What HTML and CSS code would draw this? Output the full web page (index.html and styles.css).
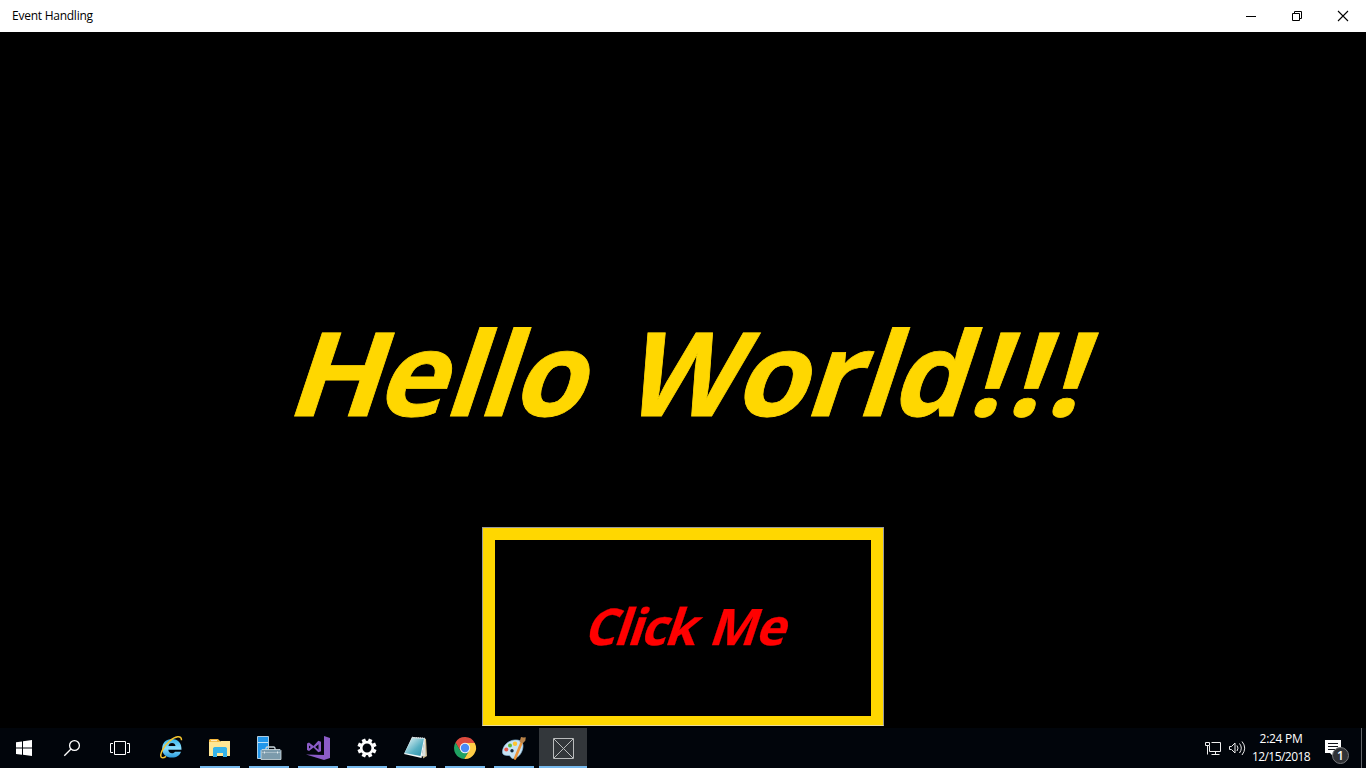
FILE: index.html
```html
<!DOCTYPE html>
<html lang="en">
<head>
<meta charset="utf-8">
<title>Event Handling</title>
<link rel="stylesheet" href="styles.css">
</head>
<body>
<div class="screen">
  <header class="titlebar">
    <span class="title">Event Handling</span>
    <div class="controls">
      <svg width="46" height="32" viewBox="0 0 46 32"><path d="M18 16.500h10" stroke="#000"/></svg>
      <svg width="46" height="32" viewBox="0 0 46 32" fill="none" stroke="#000"><path d="M18.500 13.500h7v7h-7zM20.500 13.500v-2h7v7h-2"/></svg>
      <svg width="46" height="32" viewBox="0 0 46 32"><path d="M18 11l10 10M28 11l-10 10" stroke="#000" stroke-width="1.100"/></svg>
    </div>
  </header>
  <main class="content">
    <h1 class="greeting"><span class="hello"><span class="cap">H</span>ello</span><span class="world">World</span><span class="bangs">!!!</span></h1>
    <button class="click"><span class="face"><span class="click-word">Click</span><span class="me-word">Me</span></span></button>
  </main>
  <footer class="taskbar">
    <div class="slot"><svg width="48" height="40" viewBox="0 0 48 40"><path fill="#fff" d="M16 14.200l6-.8v6.100h-6zM23 13.200l9-1.200v7.500h-9zM16 20.500h6v6.300l-6-.8zM23 20.500h9V28l-9-1.200z"/></svg></div>
    <div class="slot"><svg width="48" height="40" viewBox="0 0 48 40" fill="none" stroke="#fff" stroke-width="1.300"><circle cx="26.500" cy="17.500" r="4.900"/><path d="M23 21l-6.700 6.700"/></svg></div>
    <div class="slot"><svg width="48" height="40" viewBox="0 0 48 40" fill="none" stroke="#fff"><path d="M18.500 13.500h11v13h-11zM17 15.500h-2.500v9H17M31 15.500h2.500v9H31"/></svg></div>
    <nav class="apps">
      <div class="app"><svg width="40" height="40" viewBox="1 0 40 40"><defs><linearGradient id="ie" x2="0" y2="1"><stop stop-color="#35b4e9"/><stop offset=".5" stop-color="#8be0ff"/><stop offset="1" stop-color="#2a9cdd"/></linearGradient></defs><path fill="url(#ie)" fill-rule="evenodd" d="M31.500 21.800H18.300c.2 2.300 1.600 3.500 3.700 3.500 1.500 0 2.500-.6 3-1.500h6c-1.200 3.600-4.300 5.800-9 5.800-6 0-9.800-3.400-9.800-9.200 0-5.700 4-9.500 9.700-9.500 6.300 0 9.900 4.200 9.600 10.900zM18.500 18h7c-.2-2-1.500-3.100-3.500-3.100-1.900 0-3.200 1.100-3.500 3.100z"/><path d="M31.500 12.200c.3-5.500-6.500-4.200-12 1-6.500 5.500-10 13.500-8.200 16 1 1 2.900.5 4.700-.8" fill="none" stroke="#f5c52f" stroke-width="1.500"/></svg></div>
      <div class="app open"><svg width="40" height="40" viewBox="0 0 40 40"><path fill="#f5b83d" d="M9 12l1-1h8l2 2v4H9z"/><path fill="#fff" d="M11 12.300h6v.8h-6z"/><path fill="#ffe694" d="M9 14h10l2-1h9v15H9z"/><path fill="#35b3e9" d="M13 20l1.500-1h11l1.500 1v9h-4v-4h-6v4h-4z"/></svg></div>
      <div class="app open"><svg width="40" height="40" viewBox="0 0 40 40"><path fill="#2196ea" stroke="#d7edfa" stroke-width=".8" d="M8.500 8.500h11v22h-11z"/><path stroke="#bce3fb" d="M9 14.500h10"/><path d="M17 22v-2l1-1h7l1 1v2" fill="none" stroke="#c7d5dc" stroke-width="1.300"/><path fill="#7c9bac" stroke="#d6e1e5" stroke-width=".8" d="M13 21.500h18l1 1v9H12v-9z"/><path d="M12.500 24.500h19" stroke="#b7c9d2" stroke-width=".7"/><path d="M15.500 23.500v2M28.500 23.500v2" stroke="#dfe8ec"/></svg></div>
      <div class="app open"><svg width="40" height="40" viewBox="0 0 40 40" fill="#8b5cc7"><path d="M26 8l6 2v20l-6 2-18-5.600 18 .500z"/><path fill-rule="evenodd" d="M9 15.500l2-1 4.500 3.500 4.800-5.200 2.700 1v9.500l-2.700 1-4.800-4.800-4.500 3.500-2-1zm2 2v3l1.800-1.500zm9.500-1.300l-3.300 2.800 3.300 2.700z"/></svg></div>
      <div class="app open"><svg width="40" height="40" viewBox="0 0 40 40" fill="none" stroke="#fff"><circle cx="20" cy="20" r="5.800" stroke-width="2.700"/><path stroke-width="3.800" d="M17.500 14l-1.200-2.800M22.500 14l1.200-2.800M26 17.500l2.800-1.200M26 22.500l2.800 1.200M22.500 26l1.200 2.800M17.500 26l-1.200 2.800M14 22.500l-2.800 1.200M14 17.500l-2.800-1.200"/></svg></div>
      <div class="app open"><svg width="40" height="40" viewBox="0 0 40 40"><defs><linearGradient id="np" x2="1" y2="1"><stop offset=".1" stop-color="#d8eef1"/><stop offset=".6" stop-color="#58b0c3"/><stop offset="1" stop-color="#298fa8"/></linearGradient></defs><path fill="#cbb98f" d="M28 10l2 1 1 17-4 2.500z"/><path fill="#dbe2df" d="M29 10l.5 18-4 .5z"/><path fill="#f4f8f8" d="M16 9l13 1-3.500 20L8 26z"/><path fill="url(#np)" d="M16 10l12 .5L24.500 28 8.500 25z"/><path stroke="#ccd8dc" stroke-width="1.500" stroke-dasharray="1 1" d="M16 9.500l13 1"/></svg></div>
      <div class="app open"><svg width="40" height="40" viewBox="0 0 40 40"><path fill="#dd4b3e" d="M10.500 14.500L15.200 23 20 15h9.800A11 11 0 0 0 10.500 14.500z"/><path fill="#20a262" d="M10.500 14.500A11 11 0 0 0 19.200 31l5-8.500h-9z"/><path fill="#ffcd46" d="M29.800 15A11 11 0 0 1 19.200 31l5-8.500L20 15z"/><circle cx="20" cy="20" r="5.200" fill="#f4f4f4"/><circle cx="20" cy="20" r="4.200" fill="#4a8bf5"/></svg></div>
      <div class="app open"><svg width="40" height="40" viewBox="0 0 40 40"><path fill="#c7e3f4" stroke="#88b9da" stroke-width=".7" d="M8.500 24c0-6.500 6-11.500 12-12 5-.4 8.500 1.500 8.500 6 0 5-3.500 12-10 12.500-2.500 0-1.500-2.500-4-3-3 0-6.500 0-6.500-3.500z"/><circle cx="12.300" cy="21.500" r="2" fill="#e9594b"/><circle cx="16" cy="17.500" r="2" fill="#62b83a"/><circle cx="21" cy="15.800" r="2.200" fill="#ffc52e"/><circle cx="18" cy="22.800" r="1.700" fill="#132638"/><path d="M27.200 15.500L21 30.500" stroke="#ed963c" stroke-width="2.600" stroke-linecap="round"/><path fill="#b98349" d="M25.500 14L27 9l2.500.5 2.300-.2-.5 3.500-2.800 2.700z"/></svg></div>
      <div class="app open active"><svg width="48" height="40" viewBox="0 0 48 40" fill="none" stroke="#b9bbbc"><path d="M14.500 10.500h20v20h-20zM15 11l19 19M34 11L15 30"/></svg></div>
    </nav>
    <div class="tray">
      <svg width="50" height="40" viewBox="0 0 50 40" fill="none" stroke="#eee"><path d="M9.500 18v5.500h11v-9h-9M15.500 24v3M11.500 26.500h8M5.500 14.500h4v3h-4zM7.500 18v8.500"/><path d="M29.500 18.500h2l3.500-3.500v10l-3.500-3.500h-2zM37 17.500q2 2.500 0 5.500M39.500 15.500q3.600 4.500 0 9.500M42 13.500q5.400 6.500 0 13.500"/></svg>
      <div class="clock"><span class="time">2:24 PM</span><span class="date">12/15/2018</span></div>
      <div class="action">
        <svg width="30" height="40" viewBox="0 0 30 40"><path fill="#fff" d="M5 12h16v13h-8v3l-3-3H5z"/><path stroke="#10131a" d="M8 15.500h10M8 18.500h10M8 21.500h7"/></svg>
        <span class="badge">1</span>
      </div>
      <div class="desktop-edge"></div>
    </div>
  </footer>
</div>
</body>
</html>
```
FILE: styles.css
```css
* { box-sizing: border-box; }
body { margin: 0; background: #000; font-family: "Open Sans", "Noto Sans", sans-serif; }
svg { display: block; flex: none; }
.screen { width: 1366px; height: 768px; display: flex; flex-direction: column; overflow: hidden; }
.titlebar { height: 32px; flex: none; background: #fff; display: flex; justify-content: space-between; padding-left: 12px; color: #000; }
.title { font-size: 12px; line-height: 32px; letter-spacing: -.25px; }
.controls { display: flex; }
.content { height: 696px; flex: none; display: flex; flex-direction: column; padding-top: 259px; font-weight: 700; }
.greeting { margin: 0 0 76px 284px; height: 160px; display: flex; font-size: 116.500px; line-height: 160px; color: gold; white-space: nowrap; transform: skewX(-18.400deg); transform-origin: 0 125.600px; -webkit-text-stroke: .8px gold; }
.hello { width: 336px; letter-spacing: -1.500px; }
.cap { display: inline-block; transform: scaleX(1.060); transform-origin: 10px 0; margin-right: 2px; }
.world { width: 346px; letter-spacing: -1.300px; }
.bangs { letter-spacing: 5.700px; }
.click { width: 402px; height: 199px; margin-left: 482px; padding: 12px 12px 9px; border: 1px solid #999; border-bottom-color: #e9dc9a; background: gold; display: flex; }
.face { flex: 1; height: 176px; padding: 0 0 6px 94px; background: #000; color: red; display: flex; align-items: center; font: 700 50.400px "Open Sans", "Noto Sans", sans-serif; -webkit-text-stroke: .3px red; }
.click-word, .me-word { transform: skewX(-18.400deg); letter-spacing: -.8px; }
.click-word { width: 125px; text-align: left; letter-spacing: -2px; }
.taskbar { height: 40px; flex: none; display: flex; background: #01050b; color: #fff; }
.slot { width: 48px; }
.apps { display: flex; gap: 9px; padding-left: 7px; }
.app { width: 40px; height: 40px; border-bottom: 2px solid transparent; }
.app svg { margin-bottom: -2px; }
.open { border-bottom-color: #76b9ed; }
.active { width: 48px; margin-left: -4px; background: #33373b; }
.tray { margin-left: auto; display: flex; }
.tray > svg { margin-right: -2px; }
.clock { width: 72px; display: flex; flex-direction: column; align-items: center; padding: 2px 6px 0 0; font-size: 12px; line-height: 18px; letter-spacing: -.55px; }
.time { letter-spacing: -.3px; }
.action { position: relative; width: 41px; }
.badge { position: absolute; left: 12px; top: 19px; width: 17px; height: 17px; border: 1px solid #77797c; border-radius: 50%; background: #303236; font-size: 12px; font-weight: 600; line-height: 15px; text-align: center; }
.desktop-edge { width: 5px; border-left: 1px solid #62656a; }
```
